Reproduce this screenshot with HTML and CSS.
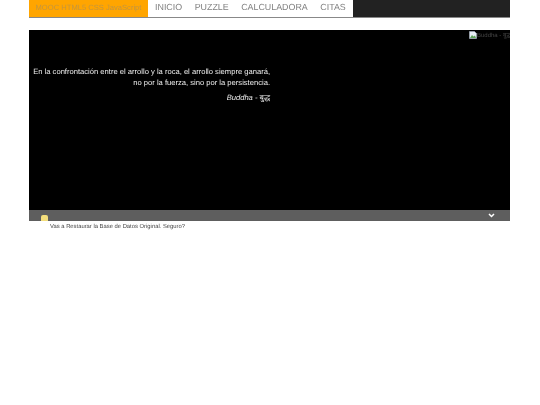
FILE: index.html
```html
<!DOCTYPE html>
<html lang="es">
<head>
    <meta charset="UTF-8">
    <title>MOOC HTML5 CSS JavaScript</title>
    <link rel="stylesheet" href="styles.css">
</head>
<body>
    <div class="container">
        <nav class="navbar">
            <a class="brand" href="#">MOOC HTML5 CSS JavaScript</a>
            <ul class="menu">
                <li><a href="#">INICIO</a></li>
                <li><a href="#">PUZZLE</a></li>
                <li><a href="#">CALCULADORA</a></li>
                <li><a href="#">CITAS</a></li>
            </ul>
        </nav>

        <section class="quote-panel">
            <div class="quote-stage">
                <div class="quote-image">
                    <svg class="broken-icon" width="8" height="8" viewBox="0 0 8 8">
                        <path d="M.5.5h5l2 2v5h-7z" fill="#e8eef6" stroke="#a9b4c2" stroke-width=".6"/>
                        <path d="M1 7l2-3 1.500 1.500L6 4.500 7 7z" fill="#5fa35a"/>
                    </svg>
                    <span>Buddha - बुद्ध</span>
                </div>
                <blockquote class="quote">
                    <p>En la confrontación entre el arrollo y la roca, el arrollo siempre ganará,<br>no por la fuerza, sino por la persistencia.</p>
                    <cite>Buddha - बुद्ध</cite>
                </blockquote>
            </div>
            <div class="quote-footer">
                <span class="note-tab"></span>
                <svg class="chevron" width="7" height="5" viewBox="0 0 7 5">
                    <path d="M1 1l2.500 2.500L6 1" fill="none" stroke="#fff" stroke-width="1.500"/>
                </svg>
            </div>
        </section>
        <p class="restore-msg">Vas a Restaurar la Base de Datos Original. Seguro?</p>
    </div>
</body>
</html>
```

FILE: styles.css
```css
body {
    font-family: 'Liberation Sans', Arial, sans-serif;
    background: #fff;
    color: #333;
    margin: 0;
    font-size: 7px;
    text-rendering: geometricPrecision;
}

.container {
    width: 481px;
    margin-left: 29px;
    /* own layer, keeps the small text on grey antialiasing */
    will-change: opacity;
}

.navbar {
    display: flex;
    height: 17px;
    background: #222;
    box-shadow: 0 1px 0 #888;
    margin-bottom: 13px;
}

.brand {
    display: block;
    width: 119px;
    line-height: 15px;
    text-align: center;
    white-space: nowrap;
    font-size: 7.600px;
    color: #c2953f;
    background: #ffa500;
    text-decoration: none;
}

.menu {
    display: flex;
    gap: 12.500px;
    list-style: none;
    margin: 0;
    padding: 0 7px;
    background: #fff;
}

.menu a {
    font-size: 8.900px;
    line-height: 15px;
    color: #808080;
    text-decoration: none;
}

.quote-panel {
    background: #000;
}

.quote-stage {
    position: relative;
    height: 180px;
    box-sizing: border-box;
    padding: 36px 0 0 4px;
}

.quote-image {
    position: absolute;
    top: 1px;
    right: 0;
    width: 41px;
    height: 8px;
    overflow: hidden;
    white-space: nowrap;
    display: flex;
    align-items: center;
    font-size: 6px;
    color: #444;
}

.broken-icon {
    flex-shrink: 0;
}

.quote {
    width: 237px;
    margin: 0;
    text-align: right;
    color: #eee;
    font-size: 7.600px;
    line-height: 11px;
    white-space: nowrap;
}

.quote p {
    margin: 0 0 4px;
}

.quote cite {
    display: block;
    line-height: 11px;
    font-family: 'Liberation Sans', 'Noto Sans', 'DejaVu Sans', sans-serif;
    font-style: italic;
}

.quote-footer {
    display: flex;
    align-items: center;
    justify-content: space-between;
    height: 11px;
    padding: 0 15px 0 12px;
    background: #5e5e5e;
}

.note-tab {
    display: block;
    width: 7px;
    height: 6px;
    margin-top: 5px;
    border-radius: 2px 2px 0 0;
    background: #f3de7c;
}

.chevron {
    margin-top: -1px;
}

.restore-msg {
    margin: 2px 0 0 21px;
    font-size: 5.850px;
    line-height: 9px;
    color: #444;
}
```
